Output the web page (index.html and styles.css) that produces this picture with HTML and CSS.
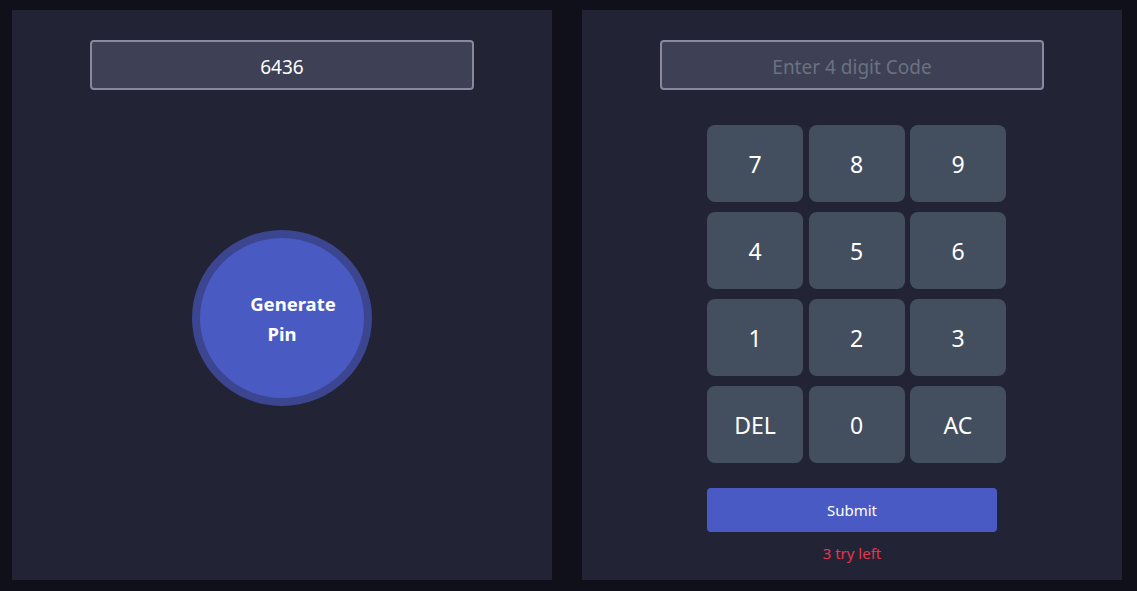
FILE: index.html
```html
<!DOCTYPE html>
<html>
<head>
  <link rel="stylesheet" href="styles.css">
</head>
<body>
  <div class="container">
    <div class="panel">
      <input class="pin-field" type="text" value="6436" readonly>
      <div class="generate-wrap">
        <button class="generate-btn">Generate<br>Pin</button>
      </div>
    </div>

    <div class="panel">
      <input class="pin-field" type="text" placeholder="Enter 4 digit Code">
      <div class="pad-wrap">
        <div class="keypad">
          <button class="key">7</button>
          <button class="key">8</button>
          <button class="key">9</button>
          <button class="key">4</button>
          <button class="key">5</button>
          <button class="key">6</button>
          <button class="key">1</button>
          <button class="key">2</button>
          <button class="key">3</button>
          <button class="key">DEL</button>
          <button class="key">0</button>
          <button class="key">AC</button>
        </div>
        <button class="submit-btn">Submit</button>
        <div class="tries">3 try left</div>
      </div>
    </div>
  </div>
</body>
</html>
```

FILE: styles.css
```css
body {
  font-family: "Noto Sans", "Open Sans", sans-serif;
  margin: 0;
  padding: 0;
  background: #0f1019;
  height: 100vh;
}
.container {
  display: flex;
  gap: 30px;
  padding: 10px 15px 11px 12px;
  height: 100%;
  box-sizing: border-box;
}
.panel {
  width: 540px;
  background: #222334;
  display: flex;
  flex-direction: column;
  align-items: center;
  padding-top: 30px;
  box-sizing: border-box;
}
.pin-field {
  width: 384px;
  height: 50px;
  box-sizing: border-box;
  background: #3e4055;
  border: 2px solid #8a879f;
  border-radius: 4px;
  color: white;
  font-family: inherit;
  font-size: 19px;
  text-align: center;
  padding: 3px 0 0;
  outline: none;
}
.pin-field::placeholder {
  color: #6b7280;
}
.generate-wrap {
  margin-top: 140px;
}
.generate-btn {
  width: 180px;
  height: 176px;
  border-radius: 50%;
  background: #4a5ac3;
  border: 8px solid #3c4690;
  color: white;
  font-family: inherit;
  font-size: 18.5px;
  font-weight: 700;
  line-height: 30px;
  text-indent: 22px;
  padding: 2px 0 0;
  cursor: pointer;
}
.pad-wrap {
  width: 290px;
  margin-top: 35px;
  display: flex;
  flex-direction: column;
}
.keypad {
  display: grid;
  grid-template-columns: repeat(3, 96px);
  grid-auto-rows: 77px;
  column-gap: 5.5px;
  row-gap: 10px;
  width: 299px;
}
.key {
  background: #434f5f;
  border: none;
  border-radius: 8px;
  color: white;
  font-family: inherit;
  font-size: 23px;
  cursor: pointer;
}
.submit-btn {
  margin-top: 25px;
  height: 44px;
  background: #4a5ac4;
  border: none;
  border-radius: 4px;
  color: white;
  font-family: inherit;
  font-size: 15px;
  cursor: pointer;
}
.tries {
  margin-top: 11px;
  text-align: center;
  color: #e5364f;
  font-size: 15px;
}
```
